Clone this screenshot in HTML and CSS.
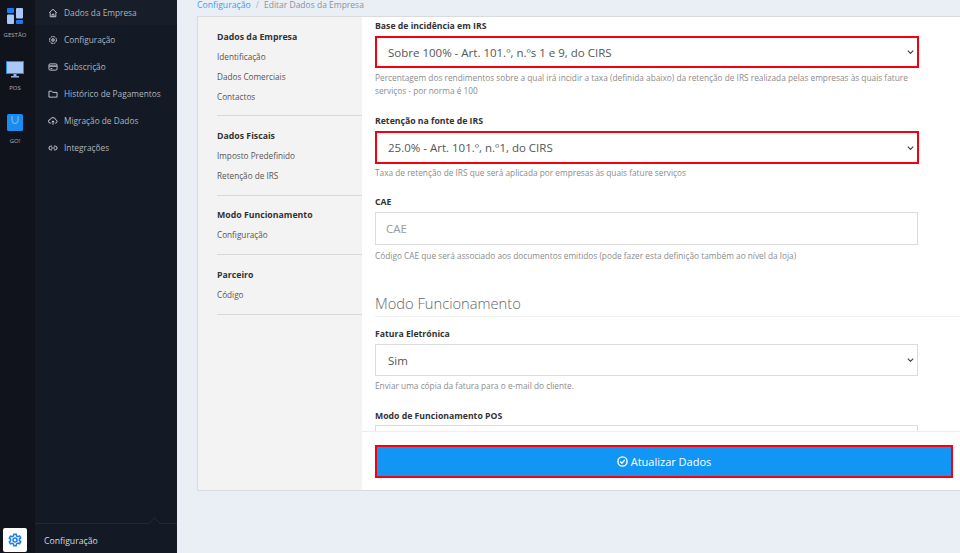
FILE: index.html
```html
<!DOCTYPE html>
<html lang="pt">
<head>
<meta charset="utf-8">
<title>Editar Dados da Empresa</title>
<link rel="stylesheet" href="styles.css">
</head>
<body>
<div class="app">
  <aside class="rail">
    <div class="rail-item rail-first">
      <svg width="16" height="16" viewBox="0 0 16 16"><rect x="0" y="0" width="7" height="5" rx="1" fill="#1a7cf0"/><rect x="0" y="6.500" width="7" height="9.500" rx="1" fill="#a9c8f5"/><rect x="9" y="0" width="7" height="10.500" rx="1" fill="#a9c8f5"/><rect x="9" y="12" width="7" height="4" rx="1" fill="#1a7cf0"/></svg>
      <span>GESTÃO</span>
    </div>
    <div class="rail-item rail-pos">
      <svg width="18" height="18" viewBox="0 0 18 18"><rect x="0" y="0" width="18" height="13" fill="#1a8cf0"/><rect x="1" y="1" width="16" height="11" fill="#a9c8f5"/><rect x="7.500" y="13" width="3" height="2.500" fill="#8fb4e8"/><rect x="5" y="15" width="8" height="1.500" fill="#8fb4e8"/></svg>
      <span>POS</span>
    </div>
    <div class="rail-item rail-go">
      <svg width="16" height="17" viewBox="0 0 16 17"><rect x="0" y="0" width="16" height="17" rx="1.500" fill="#1a8cf0"/><path d="M5 2v4.500a3 3 0 0 0 6 0V2" fill="none" stroke="#a9c8f5" stroke-width="0.800"/></svg>
      <span>GO!</span>
    </div>
    <div class="rail-spacer"></div>
    <div class="cog-box">
      <svg width="14" height="14" viewBox="0 0 24 24" fill="none" stroke="#1a7cf0" stroke-width="2.600"><circle cx="12" cy="12" r="3.500"/><path d="M10 2h4l.6 3 2.400 1.200 2.800-1.200 2 3.400-2.300 2 .1 2.600 2.200 2-2 3.400-2.800-1-2.400 1.300L14 22h-4l-.6-3-2.400-1.300-2.800 1-2-3.400 2.200-2 .1-2.600-2.300-2 2-3.400L6.800 6.200 9.200 5z"/></svg>
    </div>
  </aside>

  <nav class="side">
    <ul class="side-list">
      <li class="side-item active">
        <svg class="side-icon" viewBox="0 0 16 16" fill="none" stroke="#d5d8de" stroke-width="1.400"><path d="M2 7.500 8 2l6 5.500M3.500 7v7h9V7"/><path d="M6.500 14v-4h3v4"/></svg>
        <span>Dados da Empresa</span>
      </li>
      <li class="side-item">
        <svg class="side-icon" viewBox="0 0 16 16" fill="none" stroke="#d5d8de" stroke-width="1.600"><circle cx="8" cy="8" r="2"/><circle cx="8" cy="8" r="5.500" stroke-dasharray="3 1.300"/></svg>
        <span>Configuração</span>
      </li>
      <li class="side-item">
        <svg class="side-icon" viewBox="0 0 16 16" fill="none" stroke="#d5d8de" stroke-width="1.400"><rect x="1.500" y="3" width="13" height="10" rx="2"/><path d="M2 6.500h12" stroke-width="2"/><path d="M4 10.500h3"/></svg>
        <span>Subscrição</span>
      </li>
      <li class="side-item">
        <svg class="side-icon" viewBox="0 0 16 16" fill="none" stroke="#d5d8de" stroke-width="1.400"><path d="M1.500 3.500h4.500l1.500 2h7v7.500h-13z" stroke-linejoin="round"/></svg>
        <span>Histórico de Pagamentos</span>
      </li>
      <li class="side-item">
        <svg class="side-icon" viewBox="0 0 16 16" fill="none" stroke="#d5d8de" stroke-width="1.500"><path d="M4.500 11.500H4a3 3 0 0 1-.3-6A4.500 4.500 0 0 1 12.300 6 2.800 2.800 0 0 1 12 11.500h-.5"/><path d="M8 14V8M5.800 10 8 7.800 10.200 10"/></svg>
        <span>Migração de Dados</span>
      </li>
      <li class="side-item">
        <svg class="side-icon" viewBox="0 0 16 16" fill="none" stroke="#d5d8de" stroke-width="1.500"><path d="M6.500 5H4.500a3 3 0 0 0 0 6h2M9.500 5h2a3 3 0 0 1 0 6h-2M5 8h6"/></svg>
        <span>Integrações</span>
      </li>
    </ul>
    <div class="side-foot">
      <span class="side-caret"></span>
      <span>Configuração</span>
    </div>
  </nav>

  <div class="content">
    <div class="crumb"><a class="crumb-link">Configuração</a><span class="crumb-sep">/</span><span class="crumb-current">Editar Dados da Empresa</span></div>
    <section class="card">
      <div class="card-nav">
        <div class="nav-group">
          <h4>Dados da Empresa</h4>
          <p>Identificação</p>
          <p>Dados Comerciais</p>
          <p>Contactos</p>
        </div>
        <div class="nav-group">
          <h4>Dados Fiscais</h4>
          <p>Imposto Predefinido</p>
          <p>Retenção de IRS</p>
        </div>
        <div class="nav-group">
          <h4>Modo Funcionamento</h4>
          <p>Configuração</p>
        </div>
        <div class="nav-group">
          <h4>Parceiro</h4>
          <p>Código</p>
        </div>
      </div>
      <div class="card-main">
        <div class="form-scroll">
          <div class="field field-irs">
            <label>Base de incidência em IRS</label>
            <div class="control select marked"><span>Sobre 100% - Art. 101.º, n.ºs 1 e 9, do CIRS</span><svg class="chev" viewBox="0 0 10 6"><path d="M1 1l4 4 4-4" fill="none" stroke="#444" stroke-width="1.800"/></svg></div>
            <small>Percentagem dos rendimentos sobre a qual irá incidir a taxa (definida abaixo) da retenção de IRS realizada pelas empresas às quais fature serviços - por norma é 100</small>
          </div>
          <div class="field field-ret">
            <label>Retenção na fonte de IRS</label>
            <div class="control select marked"><span>25.0% - Art. 101.º, n.º1, do CIRS</span><svg class="chev" viewBox="0 0 10 6"><path d="M1 1l4 4 4-4" fill="none" stroke="#444" stroke-width="1.800"/></svg></div>
            <small>Taxa de retenção de IRS que será aplicada por empresas às quais fature serviços</small>
          </div>
          <div class="field field-cae">
            <label>CAE</label>
            <div class="control placeholder"><span>CAE</span></div>
            <small>Código CAE que será associado aos documentos emitidos (pode fazer esta definição também ao nível da loja)</small>
          </div>
          <h3 class="section-title">Modo Funcionamento</h3>
          <div class="field field-fat">
            <label>Fatura Eletrónica</label>
            <div class="control select"><span>Sim</span><svg class="chev" viewBox="0 0 10 6"><path d="M1 1l4 4 4-4" fill="none" stroke="#444" stroke-width="1.800"/></svg></div>
            <small>Enviar uma cópia da fatura para o e-mail do cliente.</small>
          </div>
          <div class="field field-pos">
            <label>Modo de Funcionamento POS</label>
            <div class="control"></div>
          </div>
        </div>
        <div class="card-foot">
          <button class="submit" type="button">
            <svg width="11" height="11" viewBox="0 0 12 12" fill="none" stroke="#fff"><circle cx="6" cy="6" r="5" stroke-width="1.500"/><path d="M3.500 6l1.800 1.800L8.600 4.400" stroke-width="1.500"/></svg>
            <span>Atualizar Dados</span>
          </button>
        </div>
      </div>
    </section>
  </div>
</div>
</body>
</html>
```
FILE: styles.css
```css
* { box-sizing: border-box; }
html, body { margin: 0; height: 553px; overflow: hidden; }
body { font-family: "Open Sans", "Noto Sans", sans-serif; background: #eaeff6; color: #333; }
.app { display: flex; width: 960px; height: 553px; overflow: hidden; }

.rail { width: 35px; flex: none; background: #10131b; display: flex; flex-direction: column; align-items: center; }
.rail-item { display: flex; flex-direction: column; align-items: center; color: #aab0ba; font-size: 6px; line-height: 8px; }
.rail-first { margin-top: 8px; margin-right: 5px; }
.rail-first span { margin-top: 7px; }
.rail-pos { margin-top: 22px; margin-right: 5px; }
.rail-pos span { margin-top: 5px; }
.rail-go { margin-top: 22px; margin-right: 5px; }
.rail-go span { margin-top: 6px; }
.rail-spacer { flex: 1; }
.cog-box { width: 24px; height: 24px; background: #fff; border-radius: 2px; display: flex; align-items: center; justify-content: center; margin: 0 5px 1px 0; }

.side { width: 142px; flex: none; background: #131a26; display: flex; flex-direction: column; color: #b0b5be; font-size: 8.300px; }
.side-list { list-style: none; margin: 0; padding: 0; flex: 1; }
.side-item { display: flex; align-items: center; height: 27px; padding-left: 13px; gap: 6px; white-space: nowrap; }
.side-item.active { height: 25px; margin-bottom: 1px; background: #171d29; }
.side-icon { width: 10px; height: 10px; flex: none; }
.side-foot { position: relative; height: 30px; border-top: 1px solid #222936; padding: 9px 0 0 9px; color: #d5d8de; font-size: 8.700px; line-height: 16px; }
.side-caret { position: absolute; top: -5px; left: 115px; width: 9px; height: 9px; background: #131a26; border-top: 1px solid #222936; border-left: 1px solid #222936; transform: rotate(45deg); }

.content { flex: 1; min-width: 0; padding: 0 0 0 20px; display: flex; flex-direction: column; }
.crumb { height: 16px; font-size: 8.700px; line-height: 10px; color: #8d9298; white-space: nowrap; }
.crumb-link { color: #3d9be9; }
.crumb-sep { color: #b0b4ba; margin: 0 5px; }
.crumb-current { font-size: 8.500px; }
.card { display: flex; height: 475px; border: 1px solid #d9dbde; border-right: 0; background: #fff; }

.card-nav { width: 164px; flex: none; background: #f3f3f3; padding: 10px 0 0 19px; }
.nav-group { border-bottom: 1px solid #d8d8d8; padding-bottom: 9px; margin-bottom: 9.700px; font-size: 8.200px; color: #555; }
.nav-group:first-child { padding-bottom: 8px; }
.nav-group h4 { margin: 0; font-size: 8.750px; line-height: 20px; font-weight: 700; color: #333; }
.nav-group p { margin: 0; line-height: 20px; white-space: nowrap; }

.card-main { flex: 1; min-width: 0; display: flex; flex-direction: column; }
.form-scroll { height: 414px; overflow: hidden; padding: 2px 0 0 13px; flex: none; }
.field { width: 543px; }
.field label { display: block; font-size: 8.700px; font-weight: 700; line-height: 14px; color: #333; }
.control { display: flex; align-items: center; justify-content: space-between; height: 33px; margin-top: 3px; padding: 0 3px 0 10px; border: 1px solid #dcdcdc; font-size: 11.500px; color: #555; background: #fff; }
.select { padding-left: 12px; height: 32px; }
.marked { border: 2px solid #f4000f; width: 544px; padding-left: 11px; }
.field-ret .marked { height: 33px; }
.placeholder { color: #9a9a9a; }
.chev { width: 7px; height: 4px; flex: none; }
.field small { display: block; margin-top: 3px; font-size: 8.300px; line-height: 13px; color: #8c8c8c; }
.field-ret small { margin-top: 2px; }
.field-cae small { margin-top: 4px; }
.field-ret { margin-top: 17px; }
.field-cae { margin-top: 16px; }
.field-fat { margin-top: 10px; }
.field-pos { margin-top: 17px; }
.field-pos .control { margin-top: 2px; }
.section-title { margin: 29px 0 0; padding-bottom: 1px; font-size: 14.700px; line-height: 24px; font-weight: 300; color: #666; border-bottom: 1px solid #efefef; white-space: nowrap; }

.card-foot { flex: 1; border-top: 1px solid #eee; padding: 13px 7px 0 13px; background: #fff; }
.submit { display: flex; align-items: center; justify-content: center; gap: 3px; width: 578px; height: 33px; background: #1296f6; border: 2px solid #f4000f; color: #fff; font-family: inherit; font-size: 11px; padding: 0; }
```
